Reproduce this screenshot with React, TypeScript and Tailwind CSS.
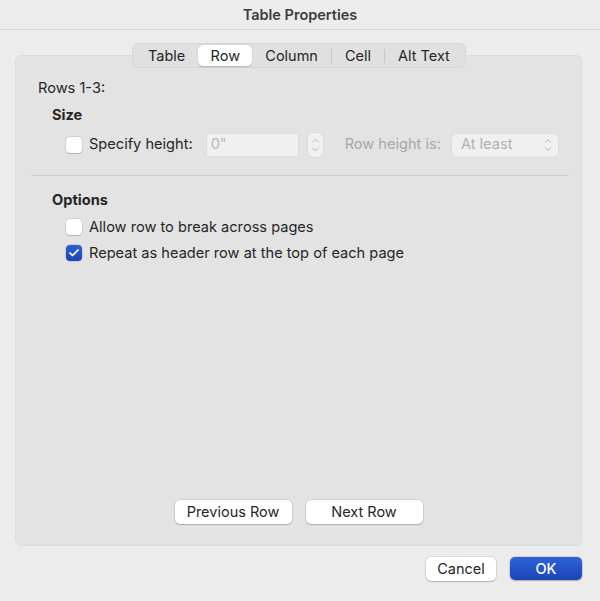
import { Check, ChevronDown, ChevronUp } from "lucide-react";

function Checkbox({ checked }: { checked?: boolean }) {
  return checked ? (
    <span className="inline-flex h-[16px] w-[16px] items-center justify-center rounded-[4px] bg-gradient-to-b from-[#2a5fd6] to-[#1b47b8] shadow-[0_0_0_0.5px_rgba(0,0,0,0.2)]">
      <Check className="size-[12px] text-white" strokeWidth={3.5} />
    </span>
  ) : (
    <span className="inline-block h-[16px] w-[16px] rounded-[4px] bg-white shadow-[0_0_0_0.5px_rgba(0,0,0,0.15),0_0.5px_1px_rgba(0,0,0,0.15)]" />
  );
}

function Stepper() {
  return (
    <span className="flex h-[24px] w-[15px] flex-col items-center justify-center rounded-[5px] bg-[#f0f0f0] text-[#b5b5b5] shadow-[0_0_0_0.5px_rgba(0,0,0,0.08)]">
      <ChevronUp className="size-[11px] -mb-[1px]" strokeWidth={2} />
      <ChevronDown className="size-[11px] -mt-[1px]" strokeWidth={2} />
    </span>
  );
}

function PushButton({ label, width }: { label: string; width: string }) {
  return (
    <button
      type="button"
      className={`h-[24px] ${width} rounded-[5px] bg-white text-[14.5px] text-[#262626] shadow-[0_0_0_0.5px_rgba(0,0,0,0.15),0_1px_1.5px_rgba(0,0,0,0.18)]`}
    >
      {label}
    </button>
  );
}

const tabs = ["Table", "Row", "Column", "Cell", "Alt Text"];

export default function App() {
  return (
    <div
      className="flex h-[601px] w-[600px] flex-col bg-[#ececec] text-[14.6px] text-[#262626]"
      style={{ fontFamily: "Inter, 'Liberation Sans', sans-serif" }}
    >
      <header className="flex h-[30px] items-center justify-center border-b border-[#d8d8d8] bg-[#ececec]">
        <span className="text-[14.5px] font-semibold text-[#3c3c3c]">Table Properties</span>
      </header>

      <div className="relative ml-[15px] mr-[18px] mt-[25px] flex h-[491px] flex-col rounded-[6px] border border-[#dcdcdc] bg-[#e3e3e3]">
        <div className="absolute left-[116px] top-[-13px] flex h-[25px] items-center rounded-[6px] border border-[#d6d6d6] bg-[#e0e0e0] px-[2px] text-[14.5px]">
          {tabs.map((t, i) => (
            <div key={t} className="flex items-center">
              {i > 2 && <span className="h-[14px] w-px bg-[#c8c8c8]" />}
              <span
                className={
                  t === "Row"
                    ? "flex h-[21px] w-[54px] items-center justify-center rounded-[5px] bg-white shadow-[0_0.5px_1.5px_rgba(0,0,0,0.2)]"
                    : "flex h-[21px] items-center justify-center px-[13px]"
                }
              >
                {t}
              </span>
            </div>
          ))}
        </div>

        <div className="flex flex-col pl-[22px] pr-[13px] pt-[23px]">
          <div className="leading-[18px]">Rows 1-3:</div>
          <div className="mt-[9px] pl-[14px] font-bold leading-[18px]">Size</div>
          <div className="mt-[9px] flex items-center pl-[28px]">
            <Checkbox />
            <span className="ml-[7px]">Specify height:</span>
            <span className="ml-[14px] flex h-[22px] w-[91px] items-center bg-[#f0f0f0] px-[4px] text-[#b8b8b8] shadow-[0_0_0_0.5px_rgba(0,0,0,0.06)]">
              0"
            </span>
            <span className="ml-[10px]">
              <Stepper />
            </span>
            <span className="ml-[22px] text-[#a8a8a8]">Row height is:</span>
            <span className="ml-[11px] flex h-[23px] w-[106px] items-center justify-between rounded-[5px] bg-[#f0f0f0] pl-[9px] pr-[5px] text-[#b0b0b0] shadow-[0_0_0_0.5px_rgba(0,0,0,0.06)]">
              At least
              <span className="flex flex-col">
                <ChevronUp className="size-[10px] -mb-[1px]" strokeWidth={2.2} />
                <ChevronDown className="size-[10px] -mt-[1px]" strokeWidth={2.2} />
              </span>
            </span>
          </div>
          <div className="ml-[-7px] mr-[-1px] mt-[18px] h-px bg-[#cfcfcf]" />
          <div className="mt-[15px] pl-[14px] font-bold leading-[18px]">Options</div>
          <div className="mt-[9px] flex items-center pl-[28px] leading-[18px]">
            <Checkbox />
            <span className="ml-[7px]">Allow row to break across pages</span>
          </div>
          <div className="mt-[8px] flex items-center pl-[28px] leading-[18px]">
            <Checkbox checked />
            <span className="ml-[7px]">Repeat as header row at the top of each page</span>
          </div>
        </div>

        <div className="mt-auto mb-[21px] flex justify-center gap-[14px]">
          <PushButton label="Previous Row" width="w-[117px]" />
          <PushButton label="Next Row" width="w-[117px]" />
        </div>
      </div>

      <div className="mt-[11px] flex justify-end gap-[14px] pr-[18px]">
        <PushButton label="Cancel" width="w-[70px]" />
        <button
          type="button"
          className="h-[23px] w-[72px] rounded-[5px] bg-gradient-to-b from-[#2f63d8] to-[#1b45b5] text-[14.5px] font-medium text-white shadow-[0_0_0_0.5px_rgba(0,0,0,0.2),0_1px_1.5px_rgba(0,0,0,0.2)]"
        >
          OK
        </button>
      </div>
    </div>
  );
}
